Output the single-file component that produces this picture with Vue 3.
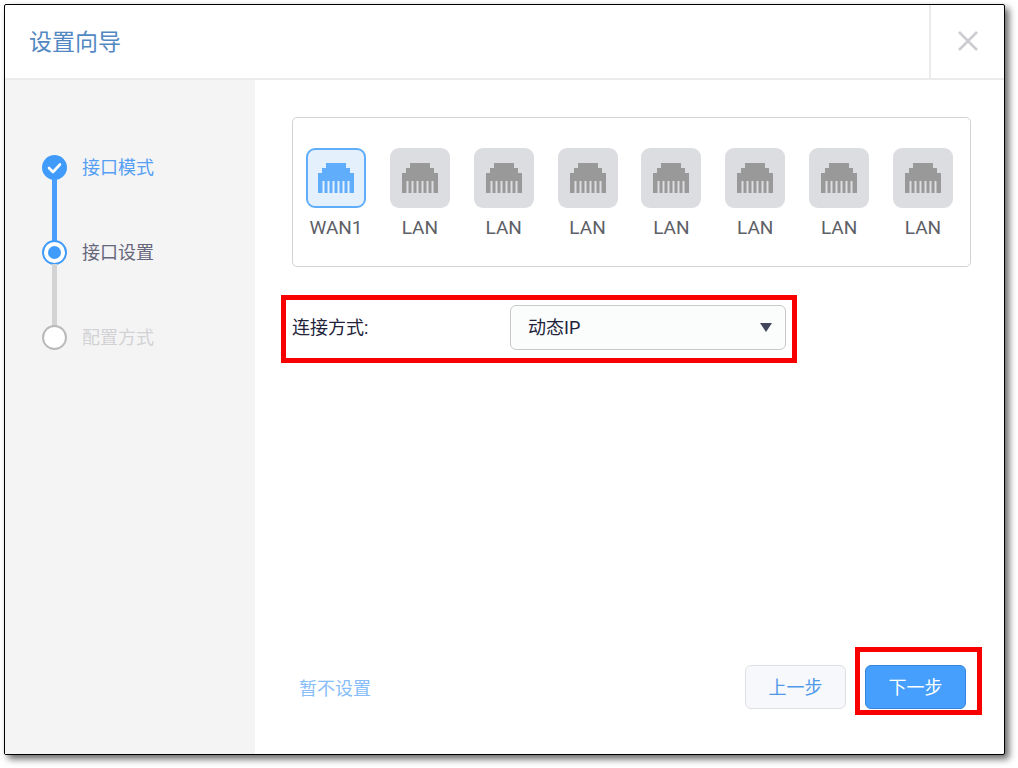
<script setup>
import { ref } from 'vue'

const steps = [
  { label: '接口模式', state: 'done' },
  { label: '接口设置', state: 'current' },
  { label: '配置方式', state: 'pending' }
]
const ports = ref(['WAN1', 'LAN', 'LAN', 'LAN', 'LAN', 'LAN', 'LAN', 'LAN'])
const selected = ref(0)
const mode = ref('dhcp')
</script>

<template>
  <div class="page">
    <section class="dialog" role="dialog" aria-labelledby="wizard-title">
      <header class="head">
        <h1 id="wizard-title" class="title">设置向导</h1>
        <button class="close" type="button" aria-label="关闭">
          <svg width="20" height="20" viewBox="0 0 20 20" aria-hidden="true">
            <path d="M1 1L19 19M19 1L1 19" fill="none" stroke="#cbcdd0" stroke-width="2.6" />
          </svg>
        </button>
      </header>
      <div class="body">
        <nav class="side">
          <ol class="steps">
            <li v-for="step in steps" :key="step.label" class="step" :class="step.state">
              <span class="dot">
                <svg v-if="step.state === 'done'" width="15" height="12" viewBox="0 0 15 12" aria-hidden="true">
                  <path d="M2 6L6 10L13 2.5" fill="none" stroke="#fff" stroke-width="2.6" stroke-linecap="round" stroke-linejoin="round" />
                </svg>
              </span>
              <span class="step-label">{{ step.label }}</span>
            </li>
          </ol>
        </nav>
        <main class="main">
          <div class="ports">
            <button
              v-for="(port, i) in ports"
              :key="i"
              type="button"
              class="port"
              :class="{ active: i === selected }"
              @click="selected = i"
            >
              <span class="tile">
                <svg width="36" height="30" viewBox="0 0 36 30" fill="currentColor" aria-hidden="true">
                  <path d="M8 0H28V5H32V10H36V30H31.5V18H29.5V30H26.5V18H24.5V30H21.5V18H19.5V30H16.5V18H14.5V30H11.5V18H9.5V30H6.5V18H4.5V30H0V10H4V5H8Z" />
                </svg>
              </span>
              <span class="port-label">{{ port }}</span>
            </button>
          </div>
          <div class="field">
            <label class="field-label" for="link-mode">连接方式:</label>
            <span class="select-wrap">
              <select id="link-mode" v-model="mode" class="select">
                <option value="dhcp">动态IP</option>
              </select>
              <svg class="caret" width="12" height="9" viewBox="0 0 12 9" aria-hidden="true">
                <path d="M0 0H12L6 9Z" fill="#41465a" />
              </svg>
            </span>
          </div>
          <footer class="foot">
            <a class="skip" href="#">暂不设置</a>
            <button class="btn" type="button">上一步</button>
            <span class="mark">
              <button class="btn primary" type="button">下一步</button>
            </span>
          </footer>
        </main>
      </div>
    </section>
  </div>
</template>

<style>
body {
  background: #fff;
}
</style>

<style scoped>
.page {
  box-sizing: border-box;
  min-height: 100vh;
  padding: 4px 13px 13px 4px;
  display: flex;
  font-family: Roboto, "Noto Sans CJK SC", sans-serif;
  font-size: 18px;
  line-height: 24px;
}
.page *,
.page *::before,
.page *::after {
  box-sizing: border-box;
}
button,
select {
  font: inherit;
  margin: 0;
  cursor: pointer;
}
.dialog {
  flex: 1;
  display: flex;
  flex-direction: column;
  background: #fff;
  border: 1px solid #000;
  border-radius: 2px;
  box-shadow: 4px 4px 7px 0 rgba(0, 0, 0, 0.6);
}
.head {
  display: flex;
  height: 75px;
  border-bottom: 2px solid #ebebeb;
}
.title {
  flex: 1;
  margin: 0;
  padding-left: 24px;
  font-size: 23px;
  font-weight: 400;
  line-height: 75px;
  color: #5288c2;
}
.close {
  width: 75px;
  padding: 0 0 2px;
  display: flex;
  align-items: center;
  justify-content: center;
  background: none;
  border: 0;
  border-left: 2px solid #ebebeb;
}
.body {
  flex: 1;
  display: flex;
}
.side {
  width: 250px;
  padding: 75px 0 0 37px;
  background: #f4f4f4;
}
.steps {
  margin: 0;
  padding: 0;
  list-style: none;
}
.step {
  position: relative;
  display: flex;
  align-items: center;
  gap: 15px;
  height: 25px;
  margin-bottom: 60px;
}
.step:not(:last-child)::after {
  content: "";
  position: absolute;
  left: 10px;
  top: 24px;
  width: 5px;
  height: 62px;
  background: #d3d3d3;
}
.step.done::after {
  background: #479ffb;
}
.dot {
  width: 25px;
  height: 25px;
  border-radius: 50%;
  display: flex;
  align-items: center;
  justify-content: center;
  background: #fff;
  border: 2px solid #b9b9b9;
}
.done .dot {
  background: #409bfb;
  border-color: #409bfb;
}
.current .dot {
  border-color: #409bfb;
}
.current .dot::before {
  content: "";
  width: 13px;
  height: 13px;
  border-radius: 50%;
  background: #409bfb;
}
.done .step-label {
  color: #559ff5;
}
.current .step-label {
  color: #66677c;
}
.pending .step-label {
  color: #d2d2d5;
}
.main {
  flex: 1;
  min-width: 0;
  display: flex;
  flex-direction: column;
  padding: 37px 22px 39px 26px;
}
.ports {
  display: flex;
  justify-content: space-between;
  margin: 0 11px;
  padding: 30px 17px 26px 13px;
  border: 1px solid #d2d2d4;
  border-radius: 5px;
}
.port {
  width: 60px;
  padding: 0;
  display: flex;
  flex-direction: column;
  align-items: center;
  gap: 8px;
  background: none;
  border: 0;
  color: #999;
}
.tile {
  width: 60px;
  height: 60px;
  display: flex;
  align-items: center;
  justify-content: center;
  background: #dcdde0;
  border-radius: 9px;
}
.active .tile {
  color: #60aefb;
  background: #e4f1fd;
  border: 2px solid #60aefb;
}
.port-label {
  font-size: 19px;
  line-height: 24px;
  color: #5d6066;
}
.field {
  display: flex;
  align-items: center;
  justify-content: space-between;
  width: 516px;
  max-width: 100%;
  height: 68px;
  margin-top: 28px;
  padding: 0 6px 3px;
  border: 5px solid #f80000;
  color: #22223a;
}
.select-wrap {
  position: relative;
  width: 276px;
}
.select {
  display: block;
  width: 100%;
  height: 45px;
  padding: 0 17px;
  appearance: none;
  background: #fbfcfc;
  border: 1px solid #c6c8c9;
  border-radius: 6px;
  color: #22223a;
}
.caret {
  position: absolute;
  right: 14px;
  top: 18px;
  pointer-events: none;
}
.foot {
  display: flex;
  align-items: center;
  margin-top: auto;
  padding-left: 18px;
}
.skip {
  margin-right: auto;
  padding-top: 16px;
  color: #86bdfa;
  text-decoration: none;
}
.btn {
  width: 101px;
  height: 44px;
  padding: 2px 0 0;
  background: #f7f8fb;
  border: 1px solid #dfe0e4;
  border-radius: 6px;
  color: #4f98ea;
}
.foot > .btn {
  margin: 12px 9px 0 0;
}
.mark {
  padding: 13px 11px 1px 5px;
  border: 5px solid #f80000;
}
.primary {
  display: block;
  background: #469ffc;
  border-color: #3585de;
  color: #fff;
}
</style>
